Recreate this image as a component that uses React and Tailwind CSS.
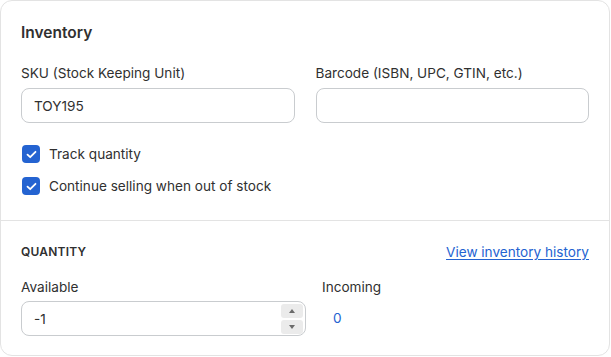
import { useState } from 'react'

// small checked box like the Polaris one
const Check = ({ label }) => (
    <label className="flex items-center gap-[9px] h-5 pl-px">
        <span className="w-[18px] h-[18px] rounded-[4px] bg-[#2463d1] flex items-center justify-center">
            <svg width="11" height="9" viewBox="0 0 11 9" fill="none">
                <path d="M1.5 4.6 L4.2 7.2 L9.5 1.8" stroke="white" strokeWidth="1.8" strokeLinecap="round" strokeLinejoin="round" />
            </svg>
        </span>
        <span className="text-[13.6px] text-[#303030]">{label}</span>
    </label>
)

const App = () => {
    const [sku, setSku] = useState('TOY195')
    const [barcode, setBarcode] = useState('')
    const [available, setAvailable] = useState('-1')

    return (
        <div className="w-[611px] h-[357px] bg-white" style={{ fontFamily: 'Inter, "Noto Sans", sans-serif' }}>
            <div className="w-[610px] h-[356px] border border-[#e3e3e3] rounded-xl bg-white text-[#303030]">
                <div className="px-5 pt-[22px] pb-[24px] border-b border-[#e3e3e3]">
                    <h2 className="text-[15.5px] leading-5 font-semibold">Inventory</h2>
                    <div className="grid grid-cols-2 gap-x-[21px] mt-[20px]">
                        <div>
                            <div className="text-[13.6px] leading-5 mb-[5px]">SKU (Stock Keeping Unit)</div>
                            <input
                                value={sku}
                                onChange={(e) => setSku(e.target.value)}
                                className="w-full h-[35px] px-3 border border-[#c9cccf] rounded-lg text-[13.6px] outline-none"
                            />
                        </div>
                        <div>
                            <div className="text-[13.6px] leading-5 mb-[5px]">Barcode (ISBN, UPC, GTIN, etc.)</div>
                            <input
                                value={barcode}
                                onChange={(e) => setBarcode(e.target.value)}
                                className="w-full h-[35px] px-3 border border-[#c9cccf] rounded-lg text-[13.6px] outline-none"
                            />
                        </div>
                    </div>
                    <div className="mt-[21px] flex flex-col gap-3">
                        <Check label="Track quantity" />
                        <Check label="Continue selling when out of stock" />
                    </div>
                </div>
                <div className="px-5 pt-[23px]">
                    <div className="flex items-center justify-between h-4">
                        <h3 className="text-[12px] font-semibold tracking-[0.2px]">QUANTITY</h3>
                        <a href="#" className="text-[13.6px] text-[#2463d1] underline underline-offset-2">View inventory history</a>
                    </div>
                    <div className="flex gap-[16px] mt-[17px]">
                        <div className="w-[285px]">
                            <div className="text-[13.6px] leading-5 mb-1">Available</div>
                            <div className="h-[35px] border border-[#c9cccf] rounded-lg flex items-center">
                                <input
                                    value={available}
                                    onChange={(e) => setAvailable(e.target.value)}
                                    className="flex-1 min-w-0 h-full px-3 text-[13.6px] outline-none bg-transparent"
                                />
                                <div className="flex flex-col gap-[2px] mr-[2px]">
                                    <button className="w-[22px] h-[14px] rounded-[3px] bg-[#ebebeb] flex items-center justify-center">
                                        <svg width="6" height="4" viewBox="0 0 6 4"><path d="M3 0 L6 4 L0 4 Z" fill="#6b6b6b" /></svg>
                                    </button>
                                    <button className="w-[22px] h-[14px] rounded-[3px] bg-[#ebebeb] flex items-center justify-center">
                                        <svg width="6" height="4" viewBox="0 0 6 4"><path d="M0 0 L6 0 L3 4 Z" fill="#6b6b6b" /></svg>
                                    </button>
                                </div>
                            </div>
                        </div>
                        <div>
                            <div className="text-[13.6px] leading-5">Incoming</div>
                            <div className="text-[13.6px] text-[#2463d1] pl-[11px] mt-[11px]">0</div>
                        </div>
                    </div>
                </div>
            </div>
        </div>
    )
}

export default App
